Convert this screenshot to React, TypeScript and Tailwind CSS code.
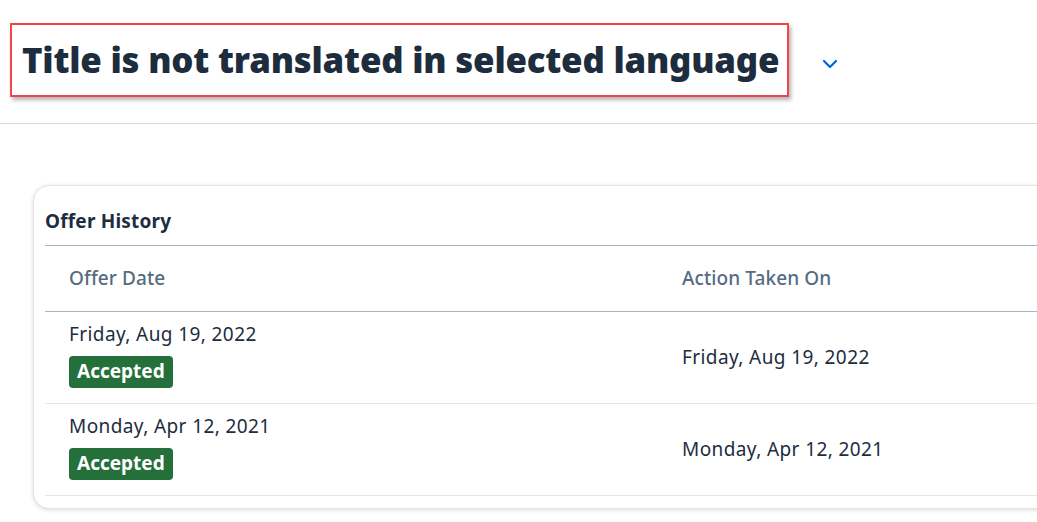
import React from "react";

const rows = [
  { offer: "Friday, Aug 19, 2022", action: "Friday, Aug 19, 2022" },
  { offer: "Monday, Apr 12, 2021", action: "Monday, Apr 12, 2021" },
];

export default function App() {
  return (
    <div
      className="w-[1037px] h-[522px] overflow-hidden bg-white text-[#1d2d3e]"
      style={{ fontFamily: '"Noto Sans", "Open Sans", sans-serif' }}
    >
      <header className="h-[124px] border-b border-[#d9d9d9] flex items-start pt-[23px] pl-[10px]">
        <div className="h-[74px] border-2 border-[#f34449] shadow-[2px_3px_4px_rgba(0,0,0,0.3)] flex items-center pl-[10px] pr-[8px]">
          <h1 className="text-[34.8px] font-black tracking-[-0.2px] leading-none text-[#1d2d3e] whitespace-nowrap">
            Title is not translated in selected language
          </h1>
        </div>
        <button className="ml-[33px] mt-[36px] text-[#0064d9]">
          <svg width="16" height="10" viewBox="0 0 16 10" fill="none">
            <path d="M2 2 L8 8 L14 2" stroke="currentColor" strokeWidth="2.2" strokeLinecap="round" strokeLinejoin="round" />
          </svg>
        </button>
      </header>

      <div className="pl-[33px] pt-[61px]">
        <div className="w-[1040px] rounded-[16px] border border-[#e5e5e5] shadow-[0_1px_4px_rgba(0,0,0,0.15)] pl-[11px] pb-[12px] bg-white">
          <div className="h-[60px] flex items-center pt-[12px] border-b border-[#a9b4be]">
            <h2 className="text-[19px] tracking-[0.2px] font-bold text-[#1d2d3e]">Offer History</h2>
          </div>
          <div className="grid grid-cols-[613px_1fr] h-[66px] items-center border-b border-[#a9b4be] text-[19px] tracking-[0.1px] text-[#556b82] font-medium">
            <div className="pl-[24px]">Offer Date</div>
            <div className="pl-[24px]">Action Taken On</div>
          </div>
          {rows.map((r, i) => (
            <div
              key={i}
              className="grid grid-cols-[613px_1fr] h-[92px] items-center border-b border-[#e5e5e5] text-[19px] tracking-[0.4px] text-[#1d2d3e]"
            >
              <div className="pl-[24px] flex flex-col items-start gap-[10px] pb-[6px]">
                <span className="leading-[24px]">{r.offer}</span>
                <span className="h-[32px] px-[8px] rounded-[4px] bg-[#256f3a] text-white font-bold text-[19px] tracking-[0px] flex items-center">
                  Accepted
                </span>
              </div>
              <div className="pl-[24px]">{r.action}</div>
            </div>
          ))}
        </div>
      </div>
    </div>
  );
}
